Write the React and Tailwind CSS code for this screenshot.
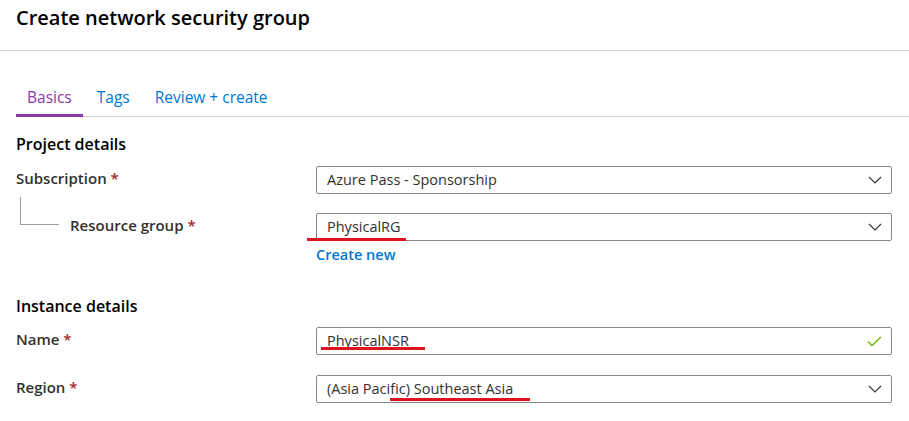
const font = { fontFamily: '"Open Sans", "Noto Sans", sans-serif' };

function Chevron() {
  return (
    <svg width="14" height="8" viewBox="0 0 14 8" className="text-[#323130]">
      <polyline points="1,1 7,7 13,1" fill="none" stroke="currentColor" strokeWidth="1.1" />
    </svg>
  );
}

function Tick() {
  return (
    <svg width="15" height="11" viewBox="0 0 15 11" className="text-[#6bb700]">
      <polyline points="1,5.5 5,9.5 14,1" fill="none" stroke="currentColor" strokeWidth="1.3" />
    </svg>
  );
}

function Required({ children }) {
  return (
    <span className="text-[15px] font-semibold text-[#323130]">
      {children} <span className="text-[#a4262c]">*</span>
    </span>
  );
}

function Field({ value, mark, chevron = true, check = false }) {
  return (
    <div className="relative flex h-[28px] items-center rounded-[2px] border border-[#8a8886] bg-white pl-[10px] pr-[9px]">
      <span className="flex-1 text-[14.5px] text-[#323130]">{value}</span>
      {chevron && <Chevron />}
      {check && <Tick />}
      {mark}
    </div>
  );
}

export default function App() {
  return (
    <div className="h-[421px] w-[909px] overflow-hidden bg-white" style={font}>
      {/* Header */}
      <div className="h-[51px] border-b border-[#d2d0ce] pl-[16px] pt-[4px]">
        <h1 className="text-[20px] font-semibold leading-[28px] text-black">Create network security group</h1>
      </div>

      {/* Tabs */}
      <div className="ml-[16px] mt-[35px] flex border-b border-[#d2d0ce] text-[15.5px]">
        <div className="-mb-px border-b-[3px] border-[#8a3aa8] px-[11px] pb-[5px] text-[#8a3aa8]">Basics</div>
        <div className="px-[14px] pb-[5px] text-[#0078d4]">Tags</div>
        <div className="px-[11px] pb-[5px] text-[#0078d4]">Review + create</div>
      </div>

      <div className="pl-[16px] pr-[17px]">
        <h2 className="mt-[15px] text-[16px] font-semibold leading-[24px] text-black">Project details</h2>

        {/* Subscription */}
        <div className="mt-[10px] flex items-start">
          <div className="w-[300px]">
            <Required>Subscription</Required>
          </div>
          <div className="flex-1">
            <Field value="Azure Pass - Sponsorship" />
          </div>
        </div>

        {/* Resource group */}
        <div className="mt-[19px] flex items-start">
          <div className="flex w-[300px] items-start">
            <div className="-mt-[16px] ml-[4px] h-[28px] w-[39px] border-b border-l border-[#a19f9d]" />
            <div className="ml-[11px]">
              <Required>Resource group</Required>
            </div>
          </div>
          <div className="flex-1">
            <Field
              value="PhysicalRG"
              mark={<div className="absolute left-[-10px] top-[24px] h-[3px] w-[99px] bg-[#e0141e]" />}
            />
            <div className="mt-[3px] text-[14.5px] font-semibold text-[#0078d4]">Create new</div>
          </div>
        </div>

        <h2 className="mt-[28px] text-[16px] font-semibold leading-[24px] text-black">Instance details</h2>

        {/* Name */}
        <div className="mt-[9px] flex items-start">
          <div className="w-[300px]">
            <Required>Name</Required>
          </div>
          <div className="flex-1">
            <Field
              value="PhysicalNSR"
              chevron={false}
              check
              mark={<div className="absolute left-[4px] top-[19px] h-[3px] w-[104px] bg-[#e0141e]" />}
            />
          </div>
        </div>

        {/* Region */}
        <div className="mt-[20px] flex items-start">
          <div className="w-[300px]">
            <Required>Region</Required>
          </div>
          <div className="flex-1">
            <Field
              value="(Asia Pacific) Southeast Asia"
              mark={<div className="absolute left-[73px] top-[22px] h-[3px] w-[140px] bg-[#e0141e]" />}
            />
          </div>
        </div>
      </div>
    </div>
  );
}
